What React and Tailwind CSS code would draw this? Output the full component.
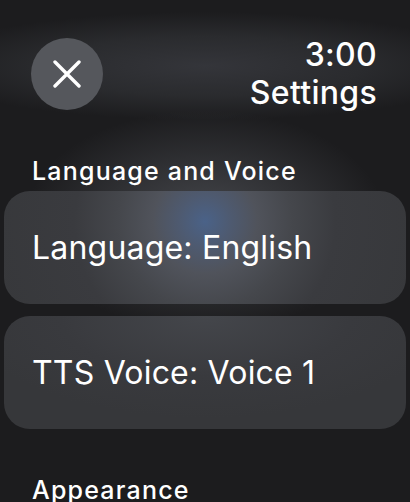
const sections = [
  { title: 'Language and Voice', items: ['Language: English', 'TTS Voice: Voice 1'] },
];

export default function App() {
  return (
    <div
      className="relative h-[502px] w-[410px] overflow-hidden bg-[#1c1c1e] text-white"
      style={{ fontFamily: 'Inter, "Noto Sans", sans-serif' }}
    >
      {/* header glow */}
      <div className="pointer-events-none absolute inset-x-0 top-0 h-[120px] bg-[radial-gradient(ellipse_70%_45%_at_50%_55%,#34353a_0%,#2a2b2e_55%,#1c1c1e_100%)]" />
      {/* focus glow */}
      <div className="pointer-events-none absolute left-[25px] top-[110px] h-[220px] w-[360px] bg-[radial-gradient(closest-side,rgba(120,124,132,0.45),rgba(28,28,30,0))]" />

      <div className="relative">
        {/* Header */}
        <div className="flex items-start justify-between pl-[31px] pr-[33px] pt-[38px]">
          <button className="flex h-[72px] w-[72px] items-center justify-center rounded-full bg-[#55575c]">
            <svg width="28" height="28" viewBox="0 0 28 28" fill="none" stroke="white" strokeWidth="3.4" strokeLinecap="round">
              <path d="M2 2L26 26M26 2L2 26" />
            </svg>
          </button>
          <div className="-mt-[2px] text-right text-[32px] font-medium leading-[38px] tracking-[0.3px]">
            <div>3:00</div>
            <div>Settings</div>
          </div>
        </div>

        {sections.map(section => (
          <div key={section.title} className="mt-[44px]">
            <h2 className="px-[32px] text-[25px] font-medium leading-[30px] tracking-[1.2px]">{section.title}</h2>
            <div className="mt-[5px] flex flex-col gap-[12px] px-[4px]">
              {section.items.map((item, i) => (
                <div
                  key={item}
                  className={`flex h-[113px] items-center rounded-[26px] px-[28px] text-[32px] leading-none tracking-[0.2px] ${
                    i === 0
                      ? 'bg-[radial-gradient(circle_at_50%_27%,#4a6288_0%,#4e5a70_12%,#50535b_24%,#45474c_40%,#3a3b3f_60%,#37383b_100%)]'
                      : 'bg-[radial-gradient(ellipse_60%_90%_at_50%_0%,#44464b_0%,#393a3e_60%,#36373a_100%)]'
                  }`}
                >
                  {item}
                </div>
              ))}
            </div>
          </div>
        ))}

        <h2 className="mt-[46px] px-[32px] text-[25px] font-medium leading-[30px] tracking-[1.2px]">Appearance</h2>
      </div>
    </div>
  );
}
